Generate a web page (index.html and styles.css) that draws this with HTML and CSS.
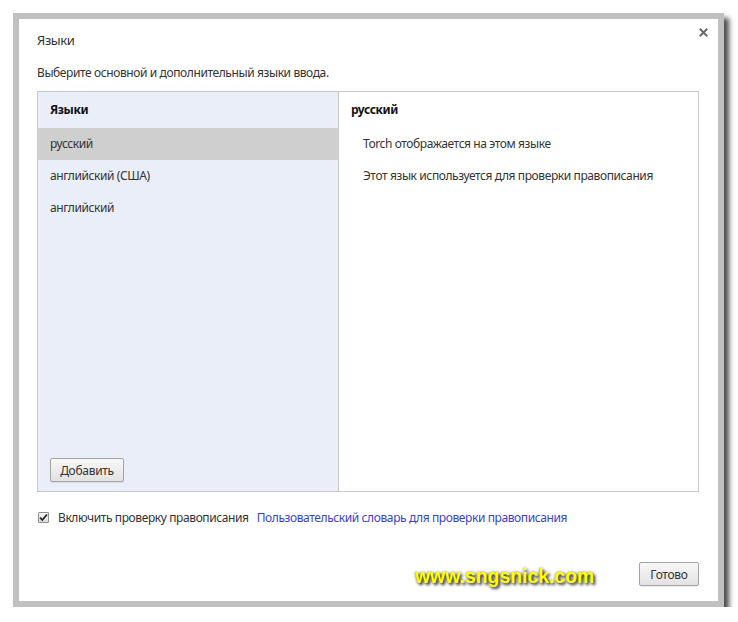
FILE: index.html
```html
<!DOCTYPE html>
<html lang="ru">
<head>
<meta charset="utf-8">
<title>Языки</title>
<link rel="stylesheet" href="styles.css">
</head>
<body>
<div class="frame">
  <div class="dialog">
    <div class="title-row">
      <div class="title">Языки</div>
      <div class="close">
        <svg width="9" height="9" viewBox="0 0 9 9"><path d="M1.5 1.5 L7.5 7.5 M7.5 1.5 L1.5 7.5" stroke="#6a6a6a" stroke-width="2" stroke-linecap="square"/></svg>
      </div>
    </div>
    <div class="subtitle">Выберите основной и дополнительный языки ввода.</div>
    <div class="panel">
      <div class="left">
        <div class="left-head">Языки</div>
        <div class="lang selected">русский</div>
        <div class="lang">английский (США)</div>
        <div class="lang">английский</div>
        <button class="btn add">Добавить</button>
      </div>
      <div class="right">
        <div class="right-head">русский</div>
        <div class="info">Torch отображается на этом языке</div>
        <div class="info">Этот язык используется для проверки правописания</div>
      </div>
    </div>
    <div class="check-row">
      <span class="checkbox">
        <svg width="11" height="11" viewBox="0 0 11 11"><path d="M2 5.5 L4.3 8 L9 2.5" fill="none" stroke="#222" stroke-width="1.8"/></svg>
      </span>
      <span class="check-label">Включить проверку правописания</span>
      <span class="link">Пользовательский словарь для проверки правописания</span>
    </div>
    <div class="footer">
      <button class="btn done">Готово</button>
    </div>
    <div class="watermark">www.sngsnick.com</div>
  </div>
</div>
</body>
</html>
```
FILE: styles.css
```css
html, body {
  margin: 0;
  padding: 0;
  background: #ffffff;
}
body {
  font-family: "Noto Sans", "Open Sans", sans-serif;
  font-size: 12px;
  letter-spacing: -0.4px;
  color: #333333;
}
.frame {
  margin: 13px 0 0 13px;
  width: 699px;
  height: 582px;
  border: 6px solid #c0c0c0;
  background: #ffffff;
  box-shadow: 5px 5px 5px rgba(0, 0, 0, 0.7);
}
.dialog {
  position: relative;
  height: 100%;
  box-sizing: border-box;
  padding: 12px 19px 0 18px;
  display: flex;
  flex-direction: column;
}
.title-row {
  display: flex;
  justify-content: space-between;
  align-items: flex-start;
  height: 18px;
}
.title {
  font-size: 13px;
  line-height: 18px;
  color: #333;
}
.close {
  margin-top: -3px;
  margin-right: -9px;
  width: 9px;
  height: 9px;
  display: flex;
}
.subtitle {
  margin-top: 15px;
  line-height: 18px;
  color: #333;
}
.panel {
  margin-top: 9px;
  height: 401px;
  box-sizing: border-box;
  border: 1px solid #c8c8c8;
  display: flex;
}
.left {
  width: 300px;
  background: #eaeef8;
  border-right: 1px solid #c8c8c8;
  display: flex;
  flex-direction: column;
}
.left-head, .right-head {
  height: 36px;
  line-height: 36px;
  padding-left: 12px;
  font-weight: bold;
  color: #111;
}
.lang {
  height: 32px;
  line-height: 32px;
  padding-left: 12px;
  color: #333;
}
.lang.selected {
  background: #cfcfcf;
}
.btn {
  font-family: "Noto Sans", "Open Sans", sans-serif;
  font-size: 12px;
  letter-spacing: -0.3px;
  color: #333;
  height: 24px;
  padding: 0;
  border: 1px solid #a4a4a4;
  border-radius: 2px;
  background: linear-gradient(#f8f8f8, #e2e2e2);
  box-shadow: 0 1px 1px rgba(0, 0, 0, 0.08);
}
.add {
  margin: auto 0 9px 12px;
  width: 74px;
}
.right {
  flex: 1;
}
.info {
  height: 32px;
  line-height: 32px;
  padding-left: 24px;
  color: #333;
}
.check-row {
  margin-top: 16px;
  height: 18px;
  display: flex;
  align-items: center;
  padding-left: 1px;
}
.checkbox {
  width: 11px;
  height: 11px;
  box-sizing: border-box;
  border: 1px solid #8f8f8f;
  border-radius: 1px;
  background: linear-gradient(#f4f4f4, #dcdcdc);
  display: flex;
  margin-right: 9px;
}
.checkbox svg {
  margin: -1px;
}
.check-label {
  color: #333;
  margin-right: 8px;
}
.link {
  color: #3a3fcf;
}
.footer {
  margin-top: 36px;
  display: flex;
  justify-content: flex-end;
}
.done {
  width: 60px;
}
.watermark {
  position: absolute;
  left: 396px;
  top: 546px;
  font-family: "Liberation Sans", Arial, sans-serif;
  font-weight: bold;
  font-size: 19.4px;
  letter-spacing: 0;
  color: #ffff00;
  text-shadow: 2px 2px 3px rgba(0, 0, 0, 0.8), 0 0 3px rgba(0, 0, 0, 0.5);
}
```
